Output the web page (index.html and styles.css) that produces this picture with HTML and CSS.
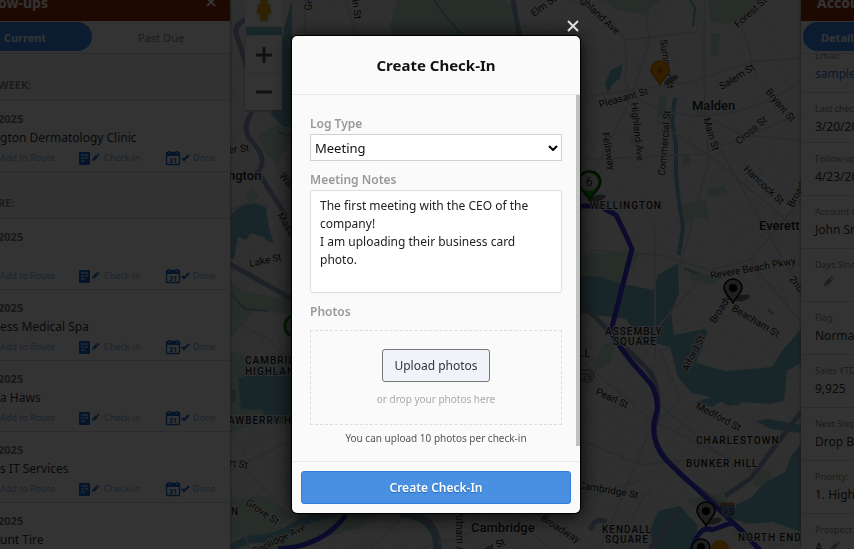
FILE: index.html
```html
<!DOCTYPE html>
<html lang="en">
<head>
    <meta charset="UTF-8">
    <meta name="viewport" content="width=device-width, initial-scale=1.0">
    <title>Create Check-In</title>
    <link rel="stylesheet" href="styles.css">
</head>
<body>
    <!-- shared icons -->
    <svg class="icon-defs" width="0" height="0" aria-hidden="true">
        <symbol id="icon-note" viewBox="0 0 24 16">
            <rect x="1" y="2" width="11" height="13" rx="1" fill="#1668d0"/>
            <path d="M3 5h7M3 8h3M7 8h3M3 11h4" stroke="#fff" stroke-width="1"/>
            <path d="M14 11l1-3 3-3 2 2-3 3zM18.500 4.500l1-1 2 2-1 1z" fill="#1668d0"/>
        </symbol>
        <symbol id="icon-calendar" viewBox="0 0 26 16">
            <rect x="1.500" y="2.500" width="13" height="12" rx="1" fill="none" stroke="#1668d0" stroke-width="1.4"/>
            <path d="M1 2h14v4H1z" fill="#1668d0"/>
            <path d="M4 1v3M12 1v3" stroke="#1668d0" stroke-width="2"/>
            <path d="M4 2v2M12 2v2" stroke="#fff" stroke-width=".8"/>
            <text x="8" y="12.500" text-anchor="middle" font-size="7" font-weight="700" fill="#1668d0">31</text>
            <path d="M17 8l2 2 5-5" fill="none" stroke="#1668d0" stroke-width="2"/>
        </symbol>
        <symbol id="icon-pencil" viewBox="0 0 12 12">
            <path d="M1 11l1-4 5-5 3 3-5 5zM8 1l1-1 3 3-1 1z" fill="#999"/>
        </symbol>
        <symbol id="pin" viewBox="0 0 20 26">
            <path d="M10 25C8 19 1 16 1 9.500a9 8.500 0 0 1 18 0C19 16 12 19 10 25z" stroke-width="1.500"/>
        </symbol>
    </svg>

    <div class="app">
        <svg class="map" viewBox="0 0 854 549" preserveAspectRatio="xMidYMid slice" role="img" aria-label="Map of Malden, Everett and Cambridge">
            <defs>
                <pattern id="streets" width="34" height="26" patternUnits="userSpaceOnUse" patternTransform="rotate(-18)">
                    <path d="M0 5h34M0 18h20M9 0v26M24 0v18" class="street"/>
                </pattern>
                <pattern id="blocks" width="17" height="13" patternUnits="userSpaceOnUse" patternTransform="rotate(32)">
                    <path d="M0 4h17M5 0v13" class="street"/>
                </pattern>
            </defs>
            <rect width="854" height="549" fill="#eeeff2"/>
            <rect width="854" height="549" fill="url(#streets)"/>
            <path d="M581 300l80 60 50 60 40 60-60 69H581zM230 430h62v119h-62zM700 150l101-60v140l-60 30z" fill="url(#blocks)"/>

            <g class="park">
                <path d="M398 0L390 25l5 14h126L514 8 505 0z"/>
                <path d="M605 0l10 10 28 4 18-14zM708 0l2 20 16 5 28-10 13-15z"/>
                <path d="M258 136l17-12 16 6v12l-14 23-13-14zM245 195l8-8 6 9-9 6z"/>
                <path d="M230 280l14 12 48 8v15l-36-5-26 28zM230 350l22 8 40-6v75l-30-6-32 12z"/>
                <path d="M581 254l36-2 23 2-18 30-41-6zM682 205l24-6 4 22-12-4-14 6zM659 95l8 0-2 25-8-4z"/>
                <path d="M710 33h10l-2 23h-7zM707 190l18-5 3 7-18 5zM630 136l10-2 2 10h-11zM683 157l7-2v10h-8z"/>
                <path d="M692 270l30 8-8 6-24-4zM602 345l14-6-6 25-18 8zM760 470l12 2-6 16-14-2z"/>
                <path d="M230 500l36-4 28 20-20 18-44 4zM300 514h80l-20 14-80 21h-20zM687 500l34-6 6 10-30 4z"/>
            </g>
            <path d="M618 318l35-12 4 35-18 20-22-14z" fill="#f2eadf"/>
            <g class="water">
                <path d="M231 214l10-8 14-3 11 5 3 20 5 15-5-1-8-6-10-3-5 7-8-3-4 22h-3z"/>
                <path d="M246 27h36v8h-36zM292 0l-8 28-6 40 5 15-12 31 12 13h9z"/>
                <path d="M238 378l12-3 42-5v52l-22 2-8-14-21-1zM231 388l5 3-1 10-4 1z"/>
                <path d="M581 276l20 1 22 7 30 6 5-15 20-12 1 30-8 20 3 22 30-6 4 3-12 31 30 8 46-4 10-16 19-22v34l-14 8-3 30-13 3-30-2-12 4-15-8-22-5-14-16-8-30-30-8-14-20-45-6z"/>
                <path d="M755 421l14-2 32 6v8l-30-4zM694 402l30-8 20 4-6 8-16-5-10 6z"/>
                <path d="M801 444l-10 12-6 16-20 10-14 16-14 6-6 14 16 6 26-2 28 10z"/>
                <path d="M658 511l22-5 18 20-6 23h-38l-4-18zM605 84l6-14 12-6-3 14-8 7-4 8z"/>
            </g>
            <g class="river">
                <path d="M675 98l-3 22 4 25 0 30 2 20 5 32-4 28" stroke-width="4"/>
                <path d="M690 0l5 8-2 18M434 0q14 22 32 38" stroke-width="2"/>
                <path d="M230 549q14-10 28-10t36-12q14-10 42-14M400 514q36 0 38 35" stroke-width="8"/>
                <path d="M231 294l14 15 22 2M278 132l12 4M684 268l14 6M768 309l6 6" stroke-width="2"/>
            </g>

            <g class="road">
                <path d="M570 0q30 10 45 25t10 55q10 30 70 36 60 0 106-36M625 40l70-8M650 0q-6 20 0 40l-20 60-30 60-18 40M705 0q-3 90 4 160l-30 110M581 97l110-15 60-20 50-4M581 160l120-6 100-40M740 20l18 60M655 120l60 40 86 72M720 150l81 140M693 110l50 25 58 5"/>
                <path d="M590 250l70 5 50 15 40-10 51-60M700 280l-60 66M750 262l51 60M655 230v130M581 360l70 60 100 50M581 440l60 25 50-5M600 549l50-120 30-30-20-50M660 405l60 50M581 500l60-20M610 549l40-60M370 549l30-30M420 549l110-35M510 514l40 35"/>
                <path d="M230 210l20-8 20 4M230 320l40 20 22 30M262 280q20 10 30 30M230 470l62-30M235 460l40 40M230 490l20 59M305 0v36M345 0l12 36"/>
            </g>
            <g class="highway">
                <path d="M248 19q-13 4-12 14l14 44M252 112q-10 14-3 26 14 14 13 24-1 8-4 10l28 44M230 264l62 35M513 0l7 38"/>
                <path d="M581 303l70 70q12 22 4 52-6 20 30 54l38 28M801 412l-50 66-26 18M650 549l28-38M590 530q6-14 16-8M410 512l14 8q12 0 12 29"/>
            </g>
            <g class="route">
                <path d="M581 206h18l17 9q10 20 16 34l-21 82q8 18 34 46 14 14 12 34-10 28 10 50l60 56q16 14 30 30 8 8 16 22M734 522l-22 8q-12-6-20 19M278 549q44-2 68-34"/>
            </g>

            <g class="city">
                <text x="692" y="110">Malden</text>
                <text x="759" y="230">Everett</text>
                <text x="471" y="532">Cambridge</text>
                <text x="228" y="180">ngton</text>
            </g>
            <g class="district">
                <text x="590" y="209">WELLINGTON</text>
                <text x="605" y="335">ASSEMBLY</text>
                <text x="613" y="345">SQUARE</text>
                <text x="696" y="444">CHARLESTOWN</text>
                <text x="686" y="467">BUNKER HILL</text>
                <text x="602" y="533">KENDALL</text>
                <text x="605" y="543">SQUARE</text>
                <text x="738" y="541">NORTH END</text>
                <text x="245" y="364">CAMBRIDGE</text>
                <text x="245" y="375">HIGHLANDS</text>
                <text x="228" y="424">AWBERRY HILL</text>
                <text x="578" y="357">LL</text>
                <text x="231" y="515">N</text>
            </g>
            <g class="road-name">
                <text transform="translate(573 -5) rotate(43)">Highland Ave</text>
                <text transform="translate(534 17) rotate(-36)">Elm St</text>
                <text transform="translate(311 11) rotate(-80)">Grove</text>
                <text transform="translate(350 -14) rotate(82)">Main St</text>
                <text transform="translate(738 28) rotate(-42)">Forest St</text>
                <text transform="translate(660 40) rotate(82)">Summer St</text>
                <text transform="translate(722 90) rotate(-32)">Salem St</text>
                <text transform="translate(600 108) rotate(-16)">Pleasant St</text>
                <text transform="translate(631 103) rotate(84)">Highland Ave</text>
                <text transform="translate(602 133) rotate(80)">Fellsway</text>
                <text transform="translate(665 176) rotate(-85)">Commercial St</text>
                <text transform="translate(703 119) rotate(73)">Main St</text>
                <text transform="translate(739 145) rotate(-40)">Cross St</text>
                <text transform="translate(765 92) rotate(50)">Bryant St</text>
                <text transform="translate(743 170) rotate(43)">Hancock St</text>
                <text transform="translate(793 208) rotate(-62)">Broadway</text>
                <text transform="translate(711 279) rotate(-10)">Revere Beach Pkwy</text>
                <text transform="translate(789 279) rotate(55)">2nd St</text>
                <text transform="translate(715 324) rotate(-58)">Broadway</text>
                <text transform="translate(731 310) rotate(31)">Beacham St</text>
                <text transform="translate(688 372) rotate(-64)">Alford St</text>
                <text transform="translate(595 394) rotate(25)">Pearl St</text>
                <text transform="translate(695 408) rotate(28)">Medford St</text>
                <text transform="translate(578 488) rotate(10)">Cambridge St</text>
                <text transform="translate(540 520) rotate(32)">Broadway</text>
                <text transform="translate(456 509) rotate(90)">Putnam Ave</text>
                <text transform="translate(475 558) rotate(-24)">River St</text>
                <text transform="translate(250 267) rotate(-12)">Lake St</text>
                <text transform="translate(229 153) rotate(-5)">er St</text>
                <text transform="translate(279 176) rotate(50)">Walnut</text>
                <text transform="translate(277 215) rotate(60)">Mass Ave</text>
                <text transform="translate(229 466) rotate(8)">rt St</text>
                <text transform="translate(245 504) rotate(34)">Grove St</text>
                <text transform="translate(254 555) rotate(-26)">Coolidge Ave</text>
            </g>

            <g class="shield">
                <rect x="579" y="370" width="15" height="12" rx="6"/>
                <text x="582" y="380">28</text>
                <path d="M721 505h13v8q-3 5-6 5-5-1-7-5z" fill="#6e8fd0"/>
                <path d="M721 504h13" stroke="#c66a3c" stroke-width="3"/>
                <text x="723" y="515">93</text>
            </g>
            <g class="pin-shadow">
                <ellipse cx="671" cy="80" rx="8" ry="3" transform="rotate(-30 671 80)"/>
                <ellipse cx="742" cy="298" rx="8" ry="3" transform="rotate(-14 742 298)"/>
                <ellipse cx="714" cy="521" rx="8" ry="3" transform="rotate(-14 714 521)"/>
                <ellipse cx="598" cy="198" rx="8" ry="3" transform="rotate(-14 598 198)"/>
            </g>
            <use href="#pin" x="650" y="60" width="20" height="26" fill="#ff9c00" stroke="#d88000"/>
            <circle cx="660" cy="70" r="3" fill="#c87800"/>
            <use href="#pin" x="723" y="278" width="20" height="26" fill="#999" stroke="#000"/>
            <circle cx="733" cy="288" r="4" fill="#000"/>
            <use href="#pin" x="696" y="501" width="20" height="26" fill="#999" stroke="#000"/>
            <circle cx="706" cy="511" r="4" fill="#000"/>
            <use href="#pin" x="691" y="538" width="20" height="26" fill="#999" stroke="#000"/>
            <circle cx="701" cy="547" r="4" fill="#000"/>
            <circle cx="720" cy="549" r="9" fill="#ff9c00"/>
            <use href="#pin" x="577" y="170" width="25" height="32" fill="#20b010" stroke="#0a5000"/>
            <circle cx="589" cy="182" r="9" fill="#ddd"/>
            <text x="589" y="186" class="pin-number">6</text>
            <circle cx="296" cy="326" r="11" fill="#ddd" stroke="#129008" stroke-width="3"/>
        </svg>

        <section class="panel follow-ups">
            <header class="panel-header">
                <h2>ow-ups</h2>
                <button class="panel-close" aria-label="Close follow-ups">
                    <svg width="12" height="12" viewBox="0 0 12 12"><path d="M2 2l8 8M10 2l-8 8" stroke="#fff" stroke-width="2"/></svg>
                </button>
            </header>
            <nav class="tabs">
                <button class="tab active">Current</button>
                <button class="tab">Past Due</button>
            </nav>
            <h3 class="group-title">WEEK:</h3>
            <article class="follow-up">
                <p class="date">2025</p>
                <p class="name">gton Dermatology Clinic</p>
                <div class="actions">
                    <a href="#">Add to Route</a>
                    <a href="#"><svg width="24" height="16"><use href="#icon-note"/></svg>Check-in</a>
                    <a href="#"><svg width="26" height="16"><use href="#icon-calendar"/></svg>Done</a>
                </div>
            </article>
            <h3 class="group-title">RE:</h3>
            <article class="follow-up">
                <p class="date">2025</p>
                <p class="name"></p>
                <div class="actions">
                    <a href="#">Add to Route</a>
                    <a href="#"><svg width="24" height="16"><use href="#icon-note"/></svg>Check-in</a>
                    <a href="#"><svg width="26" height="16"><use href="#icon-calendar"/></svg>Done</a>
                </div>
            </article>
            <article class="follow-up">
                <p class="date">2025</p>
                <p class="name">ess Medical Spa</p>
                <div class="actions">
                    <a href="#">Add to Route</a>
                    <a href="#"><svg width="24" height="16"><use href="#icon-note"/></svg>Check-in</a>
                    <a href="#"><svg width="26" height="16"><use href="#icon-calendar"/></svg>Done</a>
                </div>
            </article>
            <article class="follow-up">
                <p class="date">2025</p>
                <p class="name">a Haws</p>
                <div class="actions">
                    <a href="#">Add to Route</a>
                    <a href="#"><svg width="24" height="16"><use href="#icon-note"/></svg>Check-in</a>
                    <a href="#"><svg width="26" height="16"><use href="#icon-calendar"/></svg>Done</a>
                </div>
            </article>
            <article class="follow-up">
                <p class="date">2025</p>
                <p class="name">s IT Services</p>
                <div class="actions">
                    <a href="#">Add to Route</a>
                    <a href="#"><svg width="24" height="16"><use href="#icon-note"/></svg>Check-in</a>
                    <a href="#"><svg width="26" height="16"><use href="#icon-calendar"/></svg>Done</a>
                </div>
            </article>
            <article class="follow-up">
                <p class="date">2025</p>
                <p class="name">unt Tire</p>
            </article>
        </section>

        <div class="map-controls">
            <div class="pegman">
                <svg width="16" height="26" viewBox="0 0 16 26">
                    <circle cx="8" cy="4" r="4" fill="#f5a800"/>
                    <path d="M3 8h10l2 9-2 1-1-3-1 10H9l-1-7-1 7H5L4 15l-1 3-2-1z" fill="#f5a800" stroke="#b87800" stroke-width=".6"/>
                </svg>
            </div>
            <div class="zoom">
                <button aria-label="Zoom in"><svg width="18" height="18" viewBox="0 0 18 18"><path d="M1 9h16M9 1v16" stroke="#555" stroke-width="3"/></svg></button>
                <button aria-label="Zoom out"><svg width="18" height="18" viewBox="0 0 18 18"><path d="M1 9h16" stroke="#555" stroke-width="3"/></svg></button>
            </div>
        </div>

        <section class="panel account">
            <header class="panel-header">
                <h2>Account</h2>
            </header>
            <nav class="tabs">
                <button class="tab active">Detail</button>
            </nav>
            <dl class="fields">
                <div class="field scrolled"><dt>Email:</dt><dd><a href="#">sample</a></dd></div>
                <div class="field compact"><dt>Last check-in:</dt><dd>3/20/2025</dd></div>
                <div class="field"><dt>Follow-up:</dt><dd>4/23/2025</dd></div>
                <div class="field"><dt>Account Owner:</dt><dd>John Smith</dd></div>
                <div class="field"><dt>Days Since:</dt><dd class="empty"><svg width="11" height="11"><use href="#icon-pencil"/></svg></dd></div>
                <div class="field"><dt>Flag:</dt><dd>Normal</dd></div>
                <div class="field"><dt>Sales YTD:</dt><dd>9,925</dd></div>
                <div class="field"><dt>Next Step:</dt><dd>Drop By</dd></div>
                <div class="field"><dt>Priority:</dt><dd>1. High</dd></div>
                <div class="field"><dt>Prospect Class:</dt><dd>A &nbsp;<svg width="11" height="11"><use href="#icon-pencil"/></svg></dd></div>
            </dl>
        </section>
    </div>

    <div class="overlay">
        <form class="modal" role="dialog" aria-labelledby="modal-title">
            <button type="button" class="modal-close" aria-label="Close">
                <svg width="12" height="12" viewBox="0 0 12 12"><path d="M1 1l10 10M11 1L1 11" stroke="#ddd" stroke-width="2"/></svg>
            </button>
            <header class="modal-header">
                <h1 id="modal-title">Create Check-In</h1>
            </header>
            <div class="modal-body">
                <label for="log-type">Log Type</label>
                <div class="select-wrap">
                    <select id="log-type">
                        <option>Meeting</option>
                    </select>
                    <svg width="10" height="6" viewBox="0 0 10 6"><path d="M1 1l4 4 4-4" fill="none" stroke="#000" stroke-width="2"/></svg>
                </div>
                <label for="notes">Meeting Notes</label>
                <textarea id="notes">The first meeting with the CEO of the company!
I am uploading their business card photo.</textarea>
                <label for="upload">Photos</label>
                <div class="dropzone">
                    <button type="button" id="upload" class="upload">Upload photos</button>
                    <p>or drop your photos here</p>
                </div>
                <p class="hint">You can upload 10 photos per check-in</p>
                <div class="scroll-thumb"></div>
            </div>
            <footer class="modal-footer">
                <button type="submit" class="submit">Create Check-In</button>
            </footer>
        </form>
    </div>
</body>
</html>
```
FILE: styles.css
```css
* {
    box-sizing: border-box;
}
body {
    margin: 0;
    height: 100vh;
    overflow: hidden;
    font-family: "Noto Sans", "Open Sans", sans-serif;
    font-size: 13px;
    color: #333;
}
h1, h2, h3, p, dl, dd {
    margin: 0;
}
button, select, textarea {
    font-family: inherit;
    font-size: inherit;
}
a {
    color: #3a80d8;
    text-decoration: none;
}
.icon-defs {
    position: absolute;
}
.app {
    position: relative;
    display: flex;
    height: 100%;
    overflow: hidden;
}

/* map */
.map {
    position: absolute;
    width: 100%;
    height: 100%;
    font-family: Roboto, sans-serif;
}
.street {
    fill: none;
    stroke: #dfe2e8;
    stroke-width: 1;
}
.park {
    fill: #c0dece;
}
.water {
    fill: #7ab8ca;
}
.river {
    fill: none;
    stroke: #7ab8ca;
}
.road {
    fill: none;
    stroke: #d3d8e1;
    stroke-width: 2;
}
.highway {
    fill: none;
    stroke: #98a6c0;
    stroke-width: 5;
}
.route {
    fill: none;
    stroke: #3c36e0;
    stroke-width: 5;
    stroke-linejoin: round;
}
.city, .district, .road-name {
    fill: #222;
    stroke: #f4f4f4;
    stroke-width: 2;
    paint-order: stroke;
}
.city {
    font-size: 13px;
    font-weight: 500;
}
.district {
    font-size: 10px;
    font-weight: 500;
    letter-spacing: 1px;
}
.road-name {
    font-size: 10px;
}
.shield {
    fill: #eee;
    stroke: #555;
}
.shield text {
    font-size: 9px;
    fill: #444;
    stroke: none;
}
.pin-shadow {
    fill: #777;
}
.pin-number {
    font-size: 12px;
    text-anchor: middle;
    fill: #222;
}

/* side panels */
.panel {
    position: relative;
    display: flex;
    flex-direction: column;
    overflow: hidden;
    background: #fff;
    box-shadow: 0 0 3px #666;
}
.follow-ups {
    flex: 0 0 230px;
}
.account {
    flex: 0 0 53px;
    margin-left: auto;
}
.panel-header {
    display: flex;
    flex: none;
    align-items: flex-start;
    justify-content: space-between;
    height: 21px;
    padding: 0 13px 0 0;
    background: #96300c;
    color: #fff;
    white-space: nowrap;
}
.panel-header h2 {
    font-size: 14px;
    line-height: 6px;
}
.panel-close {
    display: flex;
    padding: 0;
    border: 0;
    background: none;
    margin-top: -4px;
}
.tabs {
    display: flex;
    flex: none;
    height: 33px;
    padding: 1px 0 2px;
    border-bottom: 1px solid #ddd;
}
.tab {
    flex: 1;
    padding: 2px 0 0;
    border: 0;
    background: none;
    color: #888;
    font-size: 11px;
}
.tab.active {
    flex: 0 0 92px;
    border-radius: 0 15px 15px 0;
    background: #3a8af0;
    color: #fff;
    font-weight: 700;
}
.follow-ups .tab.active {
    padding-right: 42px;
}
.follow-ups h2,
.group-title,
.date {
    margin-left: -2px;
}
.group-title {
    flex: none;
    height: 47px;
    padding-top: 23px;
    border-bottom: 1px solid #ddd;
    background: #fafafa;
    color: #888;
    font-size: 11px;
    line-height: 16px;
}
.follow-up {
    flex: none;
    height: 71px;
    padding-top: 9px;
    border-bottom: 1px solid #ddd;
}
.date {
    color: #777;
    font-size: 11px;
    font-weight: 700;
    line-height: 18px;
}
.name {
    height: 20px;
    font-size: 12px;
    line-height: 20px;
    white-space: nowrap;
}
.actions {
    display: grid;
    grid-template-columns: 78px 87px auto;
    padding-top: 2px;
    font-size: 9px;
    line-height: 16px;
}
.actions a {
    display: flex;
    gap: 2px;
    color: #8ab0dc;
}
.account .panel-header {
    padding-left: 16px;
}
.account .tabs {
    padding-left: 2px;
}
.account .tab.active {
    padding-left: 18px;
    border-radius: 15px 0 0 15px;
    text-align: left;
}
.fields {
    flex: 1;
    overflow: hidden;
}
.field {
    height: 53px;
    padding: 9px 0 0 14px;
    border-bottom: 1px solid #ddd;
    white-space: nowrap;
}
.field.scrolled {
    margin-top: -14px;
}
.field.compact {
    height: 50px;
}
.field dt {
    color: #888;
    font-size: 9px;
    line-height: 14px;
}
.field dd {
    font-size: 12px;
    line-height: 22px;
}
.field .empty {
    padding-left: 8px;
}

/* map buttons */
.map-controls {
    position: relative;
    width: 37px;
    margin-left: 15px;
}
.pegman {
    display: flex;
    align-items: flex-end;
    justify-content: center;
    height: 26px;
    padding-bottom: 4px;
    background: #fff;
}
.zoom {
    margin-top: 10px;
    background: #fff;
    box-shadow: 0 1px 2px #999;
}
.zoom button {
    display: flex;
    align-items: center;
    justify-content: center;
    width: 100%;
    height: 37px;
    padding: 0;
    border: 0;
    background: none;
}
.zoom button + button {
    border-top: 1px solid #e6e6e6;
}

/* check-in dialog */
.overlay {
    position: fixed;
    inset: 0;
    display: flex;
    align-items: center;
    justify-content: center;
    padding-left: 18px;
    background: rgba(0, 0, 0, 0.8);
}
.modal {
    position: relative;
    width: 288px;
    border-radius: 5px;
    background: #fafafa;
    box-shadow: 0 0 0 1px #000, 0 2px 20px #000;
}
.modal-close {
    position: absolute;
    top: -16px;
    right: 1px;
    display: flex;
    padding: 0;
    border: 0;
    background: none;
}
.modal-header {
    padding: 18px 0;
    border-bottom: 1px solid #e8e8e8;
    text-align: center;
}
.modal-header h1 {
    color: #111;
    font-size: 15px;
    line-height: 22px;
}
.modal-body {
    position: relative;
    padding: 18px 18px 14px;
}
.modal-body label {
    display: block;
    padding-top: 2px;
    color: #999;
    font-size: 12px;
    font-weight: 600;
    line-height: 18px;
}
.select-wrap {
    display: flex;
    align-items: center;
    margin: 1px 0 8px;
}
.select-wrap svg {
    margin-left: -14px;
    pointer-events: none;
}
select {
    width: 100%;
    height: 27px;
    padding: 0 4px;
    border: 1px solid #ccd1d1;
    border-radius: 0;
    background: #fff;
    color: #111;
    appearance: none;
}
textarea {
    display: block;
    width: 100%;
    height: 103px;
    margin: 1px 0 8px;
    padding: 6px 9px;
    border: 1px solid #ddd;
    border-radius: 3px;
    background: #fff;
    color: #222;
    font-size: 12px;
    line-height: 18px;
    resize: none;
}
.dropzone {
    margin-top: 9px;
    padding: 18px 0 16px;
    border: 1px dashed #ddd;
    color: #aaa;
    font-size: 10px;
    line-height: 18px;
    text-align: center;
}
.upload {
    height: 33px;
    margin-bottom: 8px;
    padding: 0 11px;
    border: 1px solid #777;
    border-radius: 3px;
    background: #f0f4fa;
    color: #333;
    font-size: 12px;
}
.hint {
    padding-top: 4px;
    color: #555;
    font-size: 10px;
    line-height: 18px;
    text-align: center;
}
.scroll-thumb {
    position: absolute;
    top: 0;
    right: 0;
    width: 4px;
    height: 96%;
    background: #c0c2c2;
}
.modal-footer {
    padding: 9px;
    border-top: 1px solid #e8e8e8;
}
.submit {
    width: 100%;
    height: 33px;
    border: 1px solid #2e7fdc;
    border-radius: 3px;
    background: #4a90e2;
    color: #fff;
    font-size: 12px;
    font-weight: 600;
    text-shadow: 0 1px 1px #2468b0;
}
```
